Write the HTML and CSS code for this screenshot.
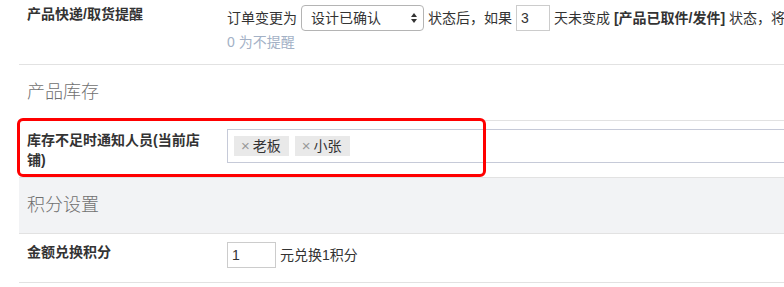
FILE: index.html
```html
<!DOCTYPE html>
<html lang="zh-CN">
<head>
<meta charset="utf-8">
<link rel="stylesheet" href="styles.css">
</head>
<body>
<div class="panel">
  <div class="row row-first">
    <div class="label">产品快递/取货提醒</div>
    <div class="control">
      <div class="inline-line">
        <span>订单变更为</span>
        <span class="select-wrap">
          <select class="select"><option>设计已确认</option></select>
          <svg class="select-arrows" width="8" height="12" viewBox="0 0 8 12"><path d="M4 1 L7 5 L1 5 Z" fill="#333"/><path d="M4 11 L7 7 L1 7 Z" fill="#333"/></svg>
        </span>
        <span>状态后，如果</span>
        <input class="num num-days" type="text" value="3">
        <span>天未变成 <b>[产品已取件/发件]</b> 状态，将通知相关人员</span>
      </div>
      <div class="hint">0 为不提醒</div>
    </div>
  </div>
  <div class="section">产品库存</div>
  <div class="row row-marked">
    <div class="label">库存不足时通知人员(当前店铺)</div>
    <div class="control">
      <div class="tagbox">
        <span class="tag"><span class="tag-x">×</span>老板</span>
        <span class="tag"><span class="tag-x">×</span>小张</span>
      </div>
    </div>
    <div class="highlight"></div>
  </div>
  <div class="section section-grey">积分设置</div>
  <div class="row">
    <div class="label">金额兑换积分</div>
    <div class="control">
      <div class="inline-line">
        <input class="num num-points" type="text" value="1">
        <span>元兑换1积分</span>
      </div>
    </div>
  </div>
</div>
</body>
</html>
```
FILE: styles.css
```css
html, body {
  margin: 0;
  padding: 0;
  background: #fff;
  overflow: hidden;
}
body {
  font-family: "Liberation Sans", "Noto Sans CJK SC", sans-serif;
  font-size: 14px;
  color: #333;
}
.panel {
  margin-left: 19px;
  width: 1000px;
}
.row {
  position: relative;
  display: grid;
  grid-template-columns: 200px 1fr;
  padding: 8px 0 0 8px;
  border-bottom: 1px solid #e2e2e2;
}
.row-first {
  padding-top: 4px;
}
.label {
  font-weight: bold;
  font-size: 14px;
  line-height: 20px;
  padding-right: 20px;
  color: #333;
}
.row-marked .label {
  margin-top: 1px;
}
.control {
  padding-bottom: 14px;
  white-space: nowrap;
}
.row-first .control {
  padding-top: 1px;
  padding-bottom: 12px;
}
.inline-line {
  display: flex;
  align-items: center;
  gap: 4px;
  height: 26px;
  line-height: 20px;
}
.inline-line b {
  font-weight: bold;
}
.select-wrap {
  position: relative;
  display: inline-block;
  height: 26px;
}
.select {
  -webkit-appearance: none;
  appearance: none;
  box-sizing: border-box;
  width: 123px;
  height: 26px;
  border: 1px solid #b4b4b4;
  border-radius: 4px;
  background: #fff;
  font: 14px "Liberation Sans", "Noto Sans CJK SC", sans-serif;
  color: #333;
  padding: 0 0 0 9px;
  margin: 0;
}
.select-arrows {
  position: absolute;
  right: 6px;
  top: 7px;
}
.num {
  box-sizing: border-box;
  height: 26px;
  border: 1px solid #ccc;
  border-radius: 0;
  padding: 0 4px;
  margin: 0;
  font: 14px "Liberation Sans", "Noto Sans CJK SC", sans-serif;
  color: #333;
  outline: none;
}
.num-days {
  width: 34px;
}
.num-points {
  width: 49px;
}
.hint {
  margin-top: 1px;
  line-height: 20px;
  color: #a3b1c6;
}
.section {
  height: 55px;
  line-height: 55px;
  padding-left: 8px;
  font-size: 18px;
  font-weight: 300;
  color: #707070;
  border-bottom: 1px solid #e2e2e2;
}
.section-grey {
  background: #f2f3f5;
}
.tagbox {
  box-sizing: border-box;
  height: 34px;
  border: 1px solid #c6cad8;
  display: flex;
  align-items: center;
  gap: 6px;
  padding: 0 6px;
}
.tag {
  display: inline-flex;
  align-items: center;
  height: 20px;
  padding: 0 8px 0 7px;
  background: #e9e9e9;
  font-size: 14px;
  line-height: 20px;
  color: #333;
}
.tag-x {
  color: #999;
  font-size: 15px;
  margin-right: 3px;
}
.highlight {
  position: absolute;
  left: -2px;
  top: -3px;
  width: 469px;
  height: 59px;
  box-sizing: border-box;
  border: 3px solid #ff0000;
  border-radius: 6px;
  pointer-events: none;
}
```
